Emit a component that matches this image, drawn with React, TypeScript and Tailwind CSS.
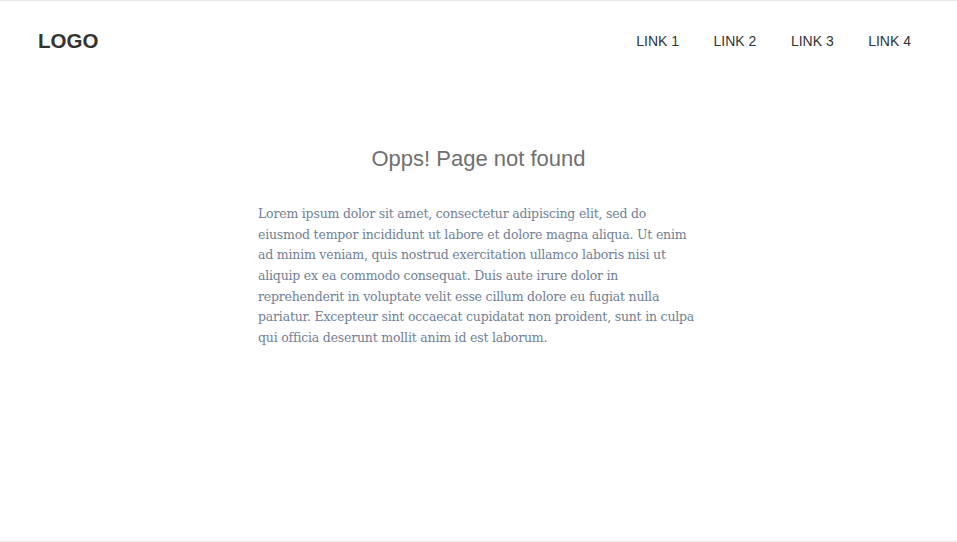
import React from "react";

const lines = [
  "Lorem ipsum dolor sit amet, consectetur adipiscing elit, sed do",
  "eiusmod tempor incididunt ut labore et dolore magna aliqua. Ut enim",
  "ad minim veniam, quis nostrud exercitation ullamco laboris nisi ut",
  "aliquip ex ea commodo consequat. Duis aute irure dolor in",
  "reprehenderit in voluptate velit esse cillum dolore eu fugiat nulla",
  "pariatur. Excepteur sint occaecat cupidatat non proident, sunt in culpa",
  "qui officia deserunt mollit anim id est laborum.",
];

export default function App() {
  return (
    <div className="h-[542px] w-full bg-white border-y border-[#e6e6e6] box-border font-['Liberation_Sans',Arial,sans-serif]">
      <header className="flex h-[81px] items-center justify-between pl-[38px] pr-[46px]">
        <div className="text-[20.5px] font-bold text-[#333] leading-none">LOGO</div>
        <nav className="flex gap-[34.5px] text-[14px] text-[#333]">
          <a href="#">LINK 1</a>
          <a href="#">LINK 2</a>
          <a href="#">LINK 3</a>
          <a href="#">LINK 4</a>
        </nav>
      </header>
      <main className="flex flex-col items-center">
        <h1 className="mt-[60px] text-[22px] leading-[33px] text-[#707070]">Opps! Page not found</h1>
        <p className="mt-[29px] w-[441px] text-[12.5px] leading-[20.67px] text-[#718096] font-['DejaVu_Serif',Georgia,serif] tracking-[-0.2px]">
          {lines.map((l, i) => (
            <span key={i} className="block whitespace-nowrap">{l}</span>
          ))}
        </p>
      </main>
    </div>
  );
}
